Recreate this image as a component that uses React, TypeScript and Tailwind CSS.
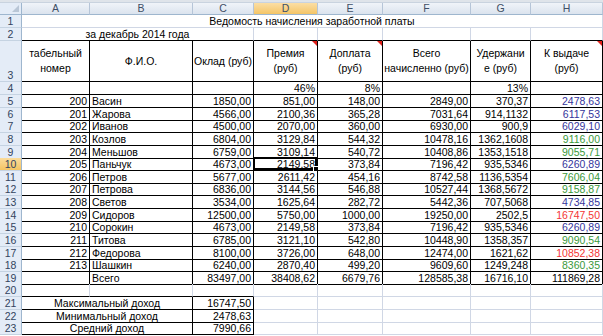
type Tone = "blue" | "green" | "red" | "black"

type Row = [string, string, string, string, string, string, string, string, Tone]

const cols = "grid grid-cols-[22px_68px_103px_61px_64px_65px_88px_60px_72px]"

const grid = "border-r border-b border-r-[#d0d7e5] border-b-[#d0d7e5]"
const box = "border-r border-b border-black"
const underline = "border-r border-b border-r-[#d0d7e5] border-b-black"

const tones: Record<Tone, string> = {
    blue: "text-[#35359c]",
    green: "text-[#3a993a]",
    red: "text-[#f43535]",
    black: "text-black",
}

const people: Row[] = [
    ["200", "Васин", "1850,00", "851,00", "148,00", "2849,00", "370,37", "2478,63", "blue"],
    ["201", "Жарова", "4566,00", "2100,36", "365,28", "7031,64", "914,1132", "6117,53", "blue"],
    ["202", "Иванов", "4500,00", "2070,00", "360,00", "6930,00", "900,9", "6029,10", "blue"],
    ["203", "Козлов", "6804,00", "3129,84", "544,32", "10478,16", "1362,1608", "9116,00", "green"],
    ["204", "Меньшов", "6759,00", "3109,14", "540,72", "10408,86", "1353,1518", "9055,71", "green"],
    ["205", "Паньчук", "4673,00", "2149,58", "373,84", "7196,42", "935,5346", "6260,89", "blue"],
    ["206", "Петров", "5677,00", "2611,42", "454,16", "8742,58", "1136,5354", "7606,04", "green"],
    ["207", "Петрова", "6836,00", "3144,56", "546,88", "10527,44", "1368,5672", "9158,87", "green"],
    ["208", "Светов", "3534,00", "1625,64", "282,72", "5442,36", "707,5068", "4734,85", "blue"],
    ["209", "Сидоров", "12500,00", "5750,00", "1000,00", "19250,00", "2502,5", "16747,50", "red"],
    ["210", "Сорокин", "4673,00", "2149,58", "373,84", "7196,42", "935,5346", "6260,89", "blue"],
    ["211", "Титова", "6785,00", "3121,10", "542,80", "10448,90", "1358,357", "9090,54", "green"],
    ["212", "Федорова", "8100,00", "3726,00", "648,00", "12474,00", "1621,62", "10852,38", "red"],
    ["213", "Шашкин", "6240,00", "2870,40", "499,20", "9609,60", "1249,248", "8360,35", "green"],
    ["", "Всего", "83497,00", "38408,62", "6679,76", "128585,38", "16716,10", "111869,28", "black"],
]

const headers = ["табельный\nномер", "Ф.И.О.", "Оклад (руб)", "Премия\n(руб)", "Доплата\n(руб)", "Всего\nначисленно (руб)", "Удержани\nе (руб)", "К выдаче\n(руб)"]
const noted = [3, 4, 7]

function RowHead({ n, active = false, bottom = false }: { n: number; active?: boolean; bottom?: boolean }) {
    return (
        <div
            className={`flex justify-center ${bottom ? "items-end" : "items-center"} leading-[12px] border-r border-b border-r-[#9eb6ce] border-b-[#c5d3e2] text-[#33445e] ${
                active ? "bg-linear-to-b from-[#fbdc9c] to-[#f4c462]" : "bg-[#e4ecf7]"
            }`}
        >
            {n}
        </div>
    )
}

function Cell({ children, className = "", align = "left" }: { children?: React.ReactNode; className?: string; align?: "left" | "right" | "center" }) {
    const justify = align === "right" ? "justify-end pr-[2px]" : align === "center" ? "justify-center" : "justify-start pl-[2px]"
    return <div className={`relative flex items-end whitespace-nowrap leading-[12px] ${justify} ${className}`}>{children}</div>
}

function Note() {
    return <span className="absolute top-0 right-0 w-0 h-0 border-t-[5px] border-l-[5px] border-t-[#e0201a] border-l-transparent" />
}

export default function App() {
    const letters = ["A", "B", "C", "D", "E", "F", "G", "H"]

    return (
        <div className="w-[603px] h-[336px] overflow-hidden bg-white text-[10.5px] text-black font-['Liberation_Sans',Arial,sans-serif]">
            {/* strip above the column letters */}
            <div className="h-[3px] bg-[#dfe4ea] border-b border-[#c9d3df]" />

            {/* Column letters */}
            <div className={`${cols} h-[12px]`}>
                <div className="relative bg-[#e4ecf7] border-r border-b border-[#9eb6ce]">
                    <span className="absolute right-[2px] bottom-[2px] w-0 h-0 border-b-[7px] border-l-[7px] border-b-[#b9c6d6] border-l-transparent" />
                </div>
                {letters.map((l) => (
                    <div
                        key={l}
                        className={`flex items-center justify-center border-r border-b border-r-[#b6c5d8] border-b-[#9eb6ce] text-[#3f4f66] leading-none ${
                            l === "D" ? "bg-linear-to-b from-[#fbdea4] to-[#f4c566]" : "bg-linear-to-b from-[#f0f4f9] to-[#dbe3ee]"
                        }`}
                    >
                        {l}
                    </div>
                ))}
            </div>

            {/* Row 1: title */}
            <div className={`${cols} h-[13px]`}>
                <RowHead n={1} />
                <Cell align="center" className={`col-span-8 ${grid}`}>Ведомость начисления заработной платы</Cell>
            </div>

            {/* Row 2 */}
            <div className={`${cols} h-[13px]`}>
                <RowHead n={2} />
                <Cell align="center" className={`col-span-3 ${underline}`}>за декабрь 2014 года</Cell>
                {[0, 1, 2, 3, 4].map((i) => (
                    <Cell key={i} className={underline} />
                ))}
            </div>

            {/* Row 3: table headers */}
            <div className={`${cols} h-[41px]`}>
                <RowHead n={3} bottom />
                {headers.map((h, i) => (
                    <div key={i} className={`relative flex items-center justify-center text-center whitespace-pre leading-[15px] ${box}`}>
                        {h}
                        {noted.includes(i) && <Note />}
                    </div>
                ))}
            </div>

            {/* Row 4: percents */}
            <div className={`${cols} h-[13px]`}>
                <RowHead n={4} />
                {["", "", "", "46%", "8%", "", "13%", ""].map((v, i) => (
                    <Cell key={i} align="right" className={box}>
                        {v}
                    </Cell>
                ))}
            </div>

            {/* Rows 5-19 */}
            {people.map((p, r) => (
                <div key={r} className={`${cols} h-[12.63px]`}>
                    <RowHead n={r + 5} active={r + 5 === 10} />
                    <Cell align="right" className={box}>{p[0]}</Cell>
                    <Cell className={box}>{p[1]}</Cell>
                    <Cell align="right" className={box}>{p[2]}</Cell>
                    <Cell align="right" className={box}>
                        {p[3]}
                        {r + 5 === 10 && (
                            <span className="absolute -left-[1px] -top-[1px] right-0 bottom-0 border-2 border-black">
                                <span className="absolute -right-[4px] -bottom-[4px] w-[6px] h-[6px] bg-black border border-white" />
                            </span>
                        )}
                    </Cell>
                    <Cell align="right" className={box}>{p[4]}</Cell>
                    <Cell align="right" className={box}>{p[5]}</Cell>
                    <Cell align="right" className={box}>{p[6]}</Cell>
                    <Cell align="right" className={`${box} ${tones[p[8]]}`}>{p[7]}</Cell>
                </div>
            ))}

            {/* Row 20 */}
            <div className={`${cols} h-[12.63px]`}>
                <RowHead n={20} />
                <Cell className={underline} />
                <Cell className={underline} />
                <Cell className={underline} />
                {[0, 1, 2, 3, 4].map((i) => (
                    <Cell key={i} className={grid} />
                ))}
            </div>

            {/* Rows 21-23: summary */}
            {[
                ["Максимальный доход", "16747,50"],
                ["Минимальный доход", "2478,63"],
                ["Средний доход", "7990,66"],
            ].map(([label, value], i) => (
                <div key={label} className={`${cols} h-[12.63px]`}>
                    <RowHead n={21 + i} />
                    <Cell align="center" className={`col-span-2 ${box}`}>{label}</Cell>
                    <Cell align="right" className={box}>{value}</Cell>
                    {[0, 1, 2, 3, 4].map((k) => (
                        <Cell key={k} className={grid} />
                    ))}
                </div>
            ))}
        </div>
    )
}
